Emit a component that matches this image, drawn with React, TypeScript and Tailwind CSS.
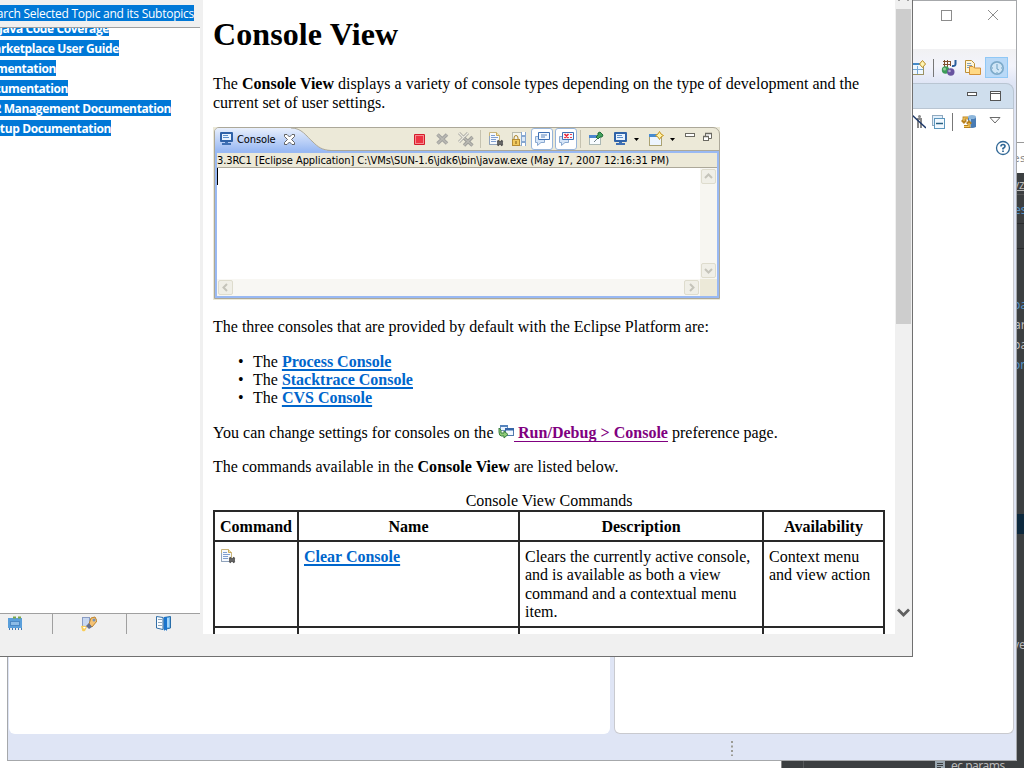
import React from "react";

type IconProps = { children: React.ReactNode; className?: string; w?: number; h?: number };

function Icon({ children, className = "", w = 16, h = 16 }: IconProps) {
  return (
    <svg width={w} height={h} viewBox={`0 0 ${w} ${h}`} className={"block shrink-0 " + className} fill="none">
      {children}
    </svg>
  );
}

function ClearIcon({ className = "" }: { className?: string }) {
  return (
    <Icon className={className}>
      <path d="M1.5 1.5H8.5L11.5 4.5V13.5H1.5Z" fill="#f6f9fd" stroke="#c9b57c" />
      <path d="M1.5 5V13.5H9" stroke="#8fa3bd" />
      <path d="M8.5 1.5V4.5H11.5" stroke="#c9a95a" fill="#f3e2a8" />
      <path d="M3 4.5H7M3 6.5H10M3 8.5H8M3 10.5H8" stroke="#7f9ed0" />
      <path d="M9.5 9.5L14.5 14.5M14.5 9.5L9.5 14.5" stroke="#4a4a4a" strokeWidth="2.2" />
      <rect x="9" y="10.500" width="6" height="3" fill="#666" />
    </Icon>
  );
}

function Monitor({ className = "" }: { className?: string }) {
  return (
    <Icon className={className}>
      <rect x="1" y="1" width="13" height="10" rx="1" fill="#2f62a8" />
      <rect x="3" y="3" width="9" height="6" fill="#e9f3ff" />
      <path d="M4 4.5H9M4 6.500H10" stroke="#5c8fc9" />
      <path d="M6 11H9V12H12V14H3V12H6Z" fill="#3f70b4" />
    </Icon>
  );
}

function ArrowDown({ className = "" }: { className?: string }) {
  return (
    <Icon w={5} h={3} className={className}>
      <path d="M0 0H5L2.5 3Z" fill="#000" />
    </Icon>
  );
}

function ToolbarSep({ className = "" }: { className?: string }) {
  return <div className={"h-[18px] w-px shrink-0 bg-[#c5c2b0] " + className} />;
}

function ToggleBubble({ className, children }: { className: string; children: React.ReactNode }) {
  return (
    <div className={"flex h-[22px] w-[22px] shrink-0 items-center justify-center rounded-[3px] border border-[#98b5da] bg-white " + className}>
      <Icon>
        <path d="M1.500 5.500H10.500V11.500H7L3.500 14.500V11.500H1.500Z" fill="#d5e5f8" stroke="#8aa9d0" />
        <path d="M4.500 1.500H15.500V8.500H4.500Z" fill="#f4f9ff" stroke="#3f70b4" />
        {children}
      </Icon>
    </div>
  );
}

function ScrollButton({ d }: { d: string }) {
  return (
    <div className="flex size-[15px] shrink-0 items-center justify-center rounded-[2px] border border-[#dedccd] bg-[#f0efe7]">
      <Icon w={9} h={9}>
        <path d={d} stroke="#c5c4ba" strokeWidth="2" />
      </Icon>
    </div>
  );
}

function ConsoleWidget() {
  return (
    <div className="h-[173px] w-[507px] bg-[#ece9d8] pl-px font-['DejaVu_Sans_Condensed','DejaVu_Sans',sans-serif] text-[11px] text-black">
      <div className="flex h-[172px] w-[506px] flex-col overflow-hidden rounded-tl-[5px] rounded-tr-[7px] border border-[#aca899]">
        <div className="flex h-[22px] shrink-0 items-center">
          <div className="relative flex h-[22px] w-[115px] shrink-0 items-center">
            <svg width="118" height="23" viewBox="0 0 118 23" className="absolute left-0 top-0">
              <defs>
                <linearGradient id="tab" x1="0" y1="0" x2="0" y2="1">
                  <stop offset="0" stopColor="#e8effc" />
                  <stop offset="1" stopColor="#99b9f3" />
                </linearGradient>
              </defs>
              <path d="M0 0H76C87 0 91 8 98 14C103 19 107 22 116 23H0Z" fill="url(#tab)" />
              <path d="M76 0C87 0 91 8 98 14C103 19 107 22 116 22.500" fill="none" stroke="#aca899" />
            </svg>
            <Monitor className="relative ml-1" />
            <span className="relative ml-[2px] mt-[2px] w-[40px] whitespace-nowrap leading-[14px] tracking-[-0.100px]">Console</span>
            <Icon w={11} h={11} className="relative ml-[7px]">
              <path d="M.5 .5H3L5.500 3L8 .5H10.500V2.500L7.500 5.500L10.500 8.500V10.500H8L5.500 8L3 10.500H.5V8.500L3.500 5.500L.5 2.500Z" fill="#fff" stroke="#555" strokeWidth=".9" />
            </Icon>
          </div>
          <Icon className="ml-[81px]">
            <rect x="3" y="3" width="11" height="11" rx="1" fill="#d41c2b" />
            <rect x="4.500" y="4.500" width="8" height="8" fill="#ed3443" stroke="#f58a90" />
          </Icon>
          <Icon className="ml-[7px]">
            <path d="M3.500 3.500L13 12.500M13 3.500L3.500 12.500" stroke="#a3a3a0" strokeWidth="3.600" />
            <path d="M3.500 3.500L13 12.500M13 3.500L3.500 12.500" stroke="#bab9b3" strokeWidth="1.500" />
          </Icon>
          <Icon className="ml-2">
            <path d="M1 2L10 11M10 2L1 11" stroke="#aaa9a3" strokeWidth="3" />
            <path d="M1 2L10 11M10 2L1 11" stroke="#eeece2" strokeWidth="1.200" />
            <path d="M6 7L14.500 14.500M14.500 6L6 14.500" stroke="#9f9f9b" strokeWidth="3.400" />
            <path d="M6 7L14.500 14.500M14.500 6L6 14.500" stroke="#bab9b3" strokeWidth="1.200" />
          </Icon>
          <ToolbarSep className="ml-[6px]" />
          <ClearIcon className="ml-[7px]" />
          <Icon className="ml-[7px]">
            <rect x="1.500" y="1.500" width="13" height="13" fill="#f3f3eb" stroke="#b9baac" />
            <rect x="10" y="1" width="5" height="14" fill="#87a8d1" />
            <path d="M11 2.500H14M11 13.500H14" stroke="#fff" strokeWidth="3" />
            <path d="M11 8H14" stroke="#dce9f8" strokeWidth="4" />
            <path d="M3 9V7Q3 4.500 5 4.500Q7 4.500 7 7V9" stroke="#aa8127" />
            <rect x="1.500" y="8.500" width="7" height="6" fill="#f1c95d" stroke="#b58b31" />
            <rect x="4.500" y="10" width="1" height="3" fill="#805c16" />
          </Icon>
          <ToggleBubble className="ml-1">
            <path d="M7 4H13M7 6H11" stroke="#5b83ba" />
          </ToggleBubble>
          <ToggleBubble className="ml-[2px]">
            <path d="M6.500 3L10.500 7M10.500 3L6.500 7M13 3V4M13 6V7" stroke="#ed2435" strokeWidth="1.700" />
          </ToggleBubble>
          <ToolbarSep className="ml-[3px]" />
          <Icon className="ml-[7px]">
            <rect x="1.500" y="4.500" width="11" height="9" fill="#f8fcff" stroke="#aab7b4" />
            <rect x="1" y="4" width="8" height="3" fill="#4c86cf" />
            <path d="M6 11L9 8" stroke="#71818a" />
            <path d="M10 2L12 1L15 4L14 6L12 6L10 8L8 6L10 4Z" fill="#43a15b" stroke="#216b39" />
          </Icon>
          <Monitor className="ml-[9px]" />
          <ArrowDown className="ml-[5px]" />
          <Icon className="ml-[9px]">
            <rect x="1.500" y="3.500" width="12" height="11" fill="#edf5ff" stroke="#aaa273" />
            <rect x="1" y="3" width="8" height="3" fill="#478bd1" />
            <path d="M11.500 .5L13 3L15.500 4.500L13 6L11.500 8.500L10 6L7.500 4.500L10 3Z" fill="#fff2a5" stroke="#c99620" />
          </Icon>
          <ArrowDown className="ml-[6px]" />
          <Icon w={11} h={13} className="mb-[3px] ml-[9px]">
            <rect x="1.500" y="2.500" width="9" height="3" fill="#fff" stroke="#6b6a62" />
          </Icon>
          <Icon w={10} h={14} className="mb-[3px] ml-[7px]">
            <path d="M3.500 2.500H9.500V7.500H6.500V5.500H3.500Z" fill="#fff" stroke="#6b6a62" />
            <rect x="1.500" y="5.500" width="5" height="4" fill="#fff" stroke="#6b6a62" />
            <path d="M3 2.500H10M1 5.500H7" stroke="#6b6a62" strokeWidth="1.500" />
          </Icon>
        </div>
        <div className="ml-[112px] h-px shrink-0 bg-[#aca899]" />
        <div className="flex min-h-0 grow flex-col border-2 border-[#99b9f3]">
          <div className="h-[15px] shrink-0 whitespace-nowrap border-b border-[#aca899] bg-[#ece9d8] leading-[16px] tracking-[-0.075px]">
            3.3RC1 [Eclipse Application] C:\VMs\SUN-1.6\jdk6\bin\javaw.exe (May 17, 2007 12:16:31 PM)
          </div>
          <div className="flex min-h-0 grow">
            <div className="min-w-0 grow bg-white">
              <div className="h-[17px] w-px bg-black" />
            </div>
            <div className="flex w-[17px] flex-col items-center justify-between bg-[#f7f6f1] py-px">
              <ScrollButton d="M1 6L4.500 2.500L8 6" />
              <ScrollButton d="M1 3L4.500 6.500L8 3" />
            </div>
          </div>
          <div className="flex h-[17px] shrink-0">
            <div className="flex grow items-center justify-between bg-[#f8f7f3] px-px">
              <ScrollButton d="M6 1L2.500 4.500L6 8" />
              <ScrollButton d="M3 1L6.500 4.500L3 8" />
            </div>
            <div className="w-[17px] bg-[#ece9d8]" />
          </div>
        </div>
      </div>
    </div>
  );
}

function Article() {
  const link = "font-bold text-[#0066cc] underline decoration-2 underline-offset-[2px] [text-decoration-skip-ink:none]";
  const cell = "border-2 border-[#292929] px-[5px] pb-[4px] pt-[6px] align-top";
  return (
    <main className="h-[634px] w-[692px] overflow-hidden bg-white pl-[10px] font-['Liberation_Serif',serif] text-[16px] leading-[18.4px] text-black">
      <h1 className="mt-[16px] text-[32px] font-bold leading-[37px] tracking-[0.100px]">Console View</h1>
      <p className="mt-[22.400px] w-[665px] tracking-[0.010px]">
        The <b>Console View</b> displays a variety of console types depending on the type of development and the current set of user settings.
      </p>
      <div className="mt-[14.800px]"><ConsoleWidget /></div>
      <p className="mt-[18.200px]">The three consoles that are provided by default with the Eclipse Platform are:</p>
      <ul className="mt-4">
        {["Process Console", "Stacktrace Console", "CVS Console"].map((name) => (
          <li key={name} className="flex h-[18.400px] pl-[25px]">
            <span className="w-[15px]">•</span>
            <span className="whitespace-pre">The </span>
            <a className={link}>{name}</a>
          </li>
        ))}
      </ul>
      <div className="mt-4 flex h-[18.400px] whitespace-pre">
        <span className="w-[285px] tracking-[0.020px]">You can change settings for consoles on the </span>
        <Icon>
          <rect x="2.500" y="1.500" width="7" height="5" fill="#eaf4ff" stroke="#6f92bd" />
          <rect x="2" y="1" width="8" height="2" fill="#5684bd" />
          <rect x="7.500" y="4.500" width="8" height="7" fill="#f2f8ff" stroke="#5279ad" />
          <rect x="7" y="4" width="9" height="2.500" fill="#3465a8" />
          <path d="M1 4L3 6V9H6V7L10 10.500L6 14V12H3.500Q1 12 1 8Z" fill="#8dca76" stroke="#3b8040" />
        </Icon>
        <a className="h-[18px] border-b border-[#800080] font-bold leading-[18.400px] tracking-[0.020px] text-[#800080]"> Run/Debug &gt; Console</a>
        <span> preference page.</span>
      </div>
      <p className="mt-4 tracking-[0.020px]">The commands available in the <b>Console View</b> are listed below.</p>
      <table className="mt-[15px] w-[672px] table-fixed border-collapse">
        <caption className="h-[18px]">Console View Commands</caption>
        <colgroup>
          <col className="w-[84px]" />
          <col className="w-[221px]" />
          <col className="w-[244px]" />
          <col className="w-[121px]" />
        </colgroup>
        <thead>
          <tr>
            {["Command", "Name", "Description", "Availability"].map((t) => (
              <th key={t} className={cell}>{t}</th>
            ))}
          </tr>
        </thead>
        <tbody>
          <tr>
            <td className={cell}><ClearIcon /></td>
            <td className={cell}><a className={link}>Clear Console</a></td>
            <td className={cell}>Clears the currently active console, and is available as both a view command and a contextual menu item.</td>
            <td className={cell}>Context menu and view action</td>
          </tr>
          <tr>
            <td className={cell + " h-10"} />
            <td className={cell} />
            <td className={cell} />
            <td className={cell} />
          </tr>
        </tbody>
      </table>
    </main>
  );
}

const topics = [
  { text: "Java Code Coverage", row: "w-[109px]" },
  { text: "arketplace User Guide", row: "w-[119px]" },
  { text: "mentation", row: "w-[56px]" },
  { text: "cumentation", row: "w-[68px]" },
  { text: "2 Management Documentation", row: "w-[171px]" },
  { text: "etup Documentation", row: "w-[111px]" },
];

function TopicsPane() {
  return (
    <aside className="flex h-[634px] w-[200px] flex-col font-['Open_Sans',sans-serif] text-white">
      <div className="h-[28px] shrink-0 border-b border-[#a0a0a0] pt-[5px]">
        <div className="flex h-[16px] w-[194px] justify-end overflow-hidden whitespace-nowrap bg-[#0078d7] text-[12px] leading-[18px] tracking-[-0.250px]">
          <span>arch Selected Topic and its Subtopics</span>
        </div>
      </div>
      <div className="min-h-0 grow overflow-hidden bg-white">
        <div className="-mt-[8px] flex flex-col gap-1">
          {topics.map((t) => (
            <div key={t.text} className={"flex h-[16px] justify-end overflow-hidden whitespace-nowrap bg-[#0078d7] text-[12px] font-bold leading-[18px] tracking-[-0.380px] " + t.row}>
              <span>{t.text}</span>
            </div>
          ))}
        </div>
      </div>
      <div className="flex h-[21px] shrink-0 border-t border-[#a0a0a0]">
        <div className="flex w-[53px] border-r border-[#a0a0a0] pl-[7px] pt-[2px]">
          <Icon>
            <rect x="1" y="2" width="14" height="10" fill="#5a9fdb" />
            <rect x="3" y="5" width="10" height="5" fill="#8dbce6" />
            <rect x="3.500" y="5.500" width="9" height="4" stroke="#4b88c4" />
            <path d="M6 1.500H9M11 1.500H14" stroke="#79a646" strokeWidth="2" />
            <path d="M2.500 12V14M5.500 12V14M8.500 12V14M11.500 12V14M14.500 12V14" stroke="#3f79b4" />
          </Icon>
        </div>
        <div className="flex w-[74px] border-r border-[#a0a0a0] pl-[28px] pt-[2px]">
          <Icon>
            <rect x="1.500" y="1.500" width="7" height="9" fill="#c7d7ef" stroke="#8a9cc3" />
            <path d="M10 2L14 1L16 5L11 11L8 8Z" fill="#f5c274" stroke="#bd832c" />
            <circle cx="13" cy="4" r="1.500" fill="#7393bd" />
            <path d="M8 7L11 11L8 13L5 10Z" fill="#68718b" />
            <path d="M0 10Q4 9 6 11L4 15Q1 16 1 14Z" fill="#f9cd59" />
            <path d="M2 11L5 11L3 13Z" fill="#fff" />
          </Icon>
        </div>
        <div className="pl-[28px] pt-[1px]">
          <Icon w={17}>
            <path d="M1.500 1.500L8 2.500V14.500L1.500 13Z" fill="#f9fcff" stroke="#326fa8" />
            <path d="M9 2.500L15.500 1.500V13L9 14.500Z" fill="#6fb8f0" stroke="#286da8" />
            <path d="M3 4.500H7M3 7.500H7M3 10.500H7" stroke="#8ba4b8" />
            <path d="M9 2H12V16L10.500 14.500L9 16Z" fill="#1974cd" />
            <path d="M13 3V12" stroke="#a3d5fa" strokeWidth="2" />
          </Icon>
        </div>
      </div>
    </aside>
  );
}

function HelpWindow() {
  return (
    <div className="absolute left-0 top-0 flex h-[657px] w-[913px] flex-col border-b border-r border-[#707070] bg-[#f0f0f0]">
      <div className="flex h-[634px]">
        <TopicsPane />
        <div className="w-[3px] bg-[#f0f0f0]" />
        <Article />
        <div className="flex w-[17px] flex-col items-center bg-[#f0f0f0]">
          <Icon w={15} h={9}>
            <path d="M2 .500H4M11 .500H13" stroke="#a0a0a0" />
          </Icon>
          <div className="h-[315px] w-[15px] bg-[#cdcdcd]" />
          <Icon w={13} h={9} className="mb-[17px] mt-auto">
            <path d="M1 1.500L6.500 7L12 1.500" stroke="#606060" strokeWidth="2.800" />
          </Icon>
        </div>
      </div>
    </div>
  );
}

function EclipseWindow() {
  return (
    <div className="absolute left-[7px] top-0 flex h-[761px] w-[1010px] flex-col border border-[#a6a8ab] bg-[#dfe5f5]">
      <div className="flex h-[48px] shrink-0 items-start justify-end bg-white pt-[8px]">
        <Icon w={12} h={12} className="mr-[34px]">
          <rect x=".5" y="1.500" width="10" height="10" stroke="#8c8c8c" />
        </Icon>
        <Icon w={12} h={12} className="mr-[17px]">
          <path d="M1 1L11 11M11 1L1 11" stroke="#8c8c8c" />
        </Icon>
      </div>
      <div className="flex h-[34px] shrink-0 items-center justify-end bg-linear-to-b from-[#f1f1f3] via-[#f3f4fb] to-[#dfe5f5] pr-[8px] pt-[3px]">
        <Icon>
          <rect x="1.500" y="3.500" width="12" height="11" fill="#eff8ff" stroke="#9b9263" />
          <path d="M1 4H11" stroke="#438aca" strokeWidth="2" />
          <path d="M2 9.500H13M7.500 6V14" stroke="#76a8d6" />
          <path d="M12.500 .5L15.500 4L12.500 7.500L9.500 4Z" fill="#fff5b4" stroke="#b98b23" />
        </Icon>
        <div className="ml-[7px] h-[18px] w-px bg-[#777]" />
        <Icon className="ml-[7px]">
          <path d="M2 1.500H10M2 4.500H10M3.500 0V7M6.500 0V7M9.500 1V6" stroke="#80502e" />
          <circle cx="4.500" cy="10" r="3.700" fill="#3c9b58" />
          <path d="M14.500 0V4Q14.500 6.500 11 6" stroke="#285d9c" strokeWidth="2" />
          <circle cx="9.800" cy="12" r="3.700" fill="#6854a0" />
          <circle cx="3.500" cy="9" r="1.500" fill="#91cc9b" />
          <circle cx="8.500" cy="11" r="1.300" fill="#b4a8d0" />
        </Icon>
        <Icon className="ml-[8px]">
          <path d="M.5 .5H6.500L9.500 3.500V12.500H.5Z" fill="#fff6d8" stroke="#bc8f36" />
          <path d="M2 3.500H6M2 5.500H7M2 7.500H5" stroke="#839fbe" />
          <path d="M4.500 6.500H8L9.500 8H15.500V14.500H4.500Z" fill="#ffd985" stroke="#d49138" />
        </Icon>
        <div className="ml-[4px] flex h-[21px] w-[23px] items-center justify-center border border-[#90c8f6] bg-[#b9d9f7]">
          <Icon>
            <circle cx="8" cy="8" r="6.200" fill="#d0e6f6" stroke="#7eabca" strokeWidth="1.700" />
            <path d="M8 4V9M8 9L10 10M3 8H4M12 8H13M8 12V13" stroke="#6c9fc2" />
          </Icon>
        </div>
      </div>
      <div className="mr-[2px] flex h-[26px] shrink-0 items-center justify-end rounded-tr-[8px] border-b border-r border-t border-[#b9c5d2] bg-[#cfdeed] pr-[12px]">
        <Icon w={10} h={12} className="mr-[13px]">
          <rect x=".5" y="2.500" width="9" height="3" fill="#fff" stroke="#555" />
        </Icon>
        <Icon w={11} h={12}>
          <rect x=".5" y="1.500" width="10" height="9" fill="#fff" stroke="#555" />
          <path d="M1 3.500H10" stroke="#555" />
        </Icon>
      </div>
      <div className="mr-[2px] flex h-[548px] shrink-0 flex-col border-r border-[#c9cacf] bg-white">
        <div className="flex h-[26px] items-center justify-end pr-[12px]">
          <Icon>
            <circle cx="9.500" cy="2.500" r="1.500" fill="#888" />
            <path d="M7 5H12M8 5V14M11 5V14" stroke="#888" strokeWidth="2" />
            <path d="M2 1L16 14" stroke="#1c3767" strokeWidth="1.500" />
          </Icon>
          <Icon w={15} className="ml-[5px]">
            <rect x="1.500" y="1.500" width="10" height="10" fill="#e1effb" stroke="#91aac0" />
            <rect x="3.500" y="4.500" width="10" height="10" fill="#f2f9ff" stroke="#5c96bd" />
            <path d="M5 9.500H12" stroke="#286284" strokeWidth="1.500" />
          </Icon>
          <div className="ml-[6px] h-[18px] w-px bg-[#777]" />
          <Icon className="ml-[8px]">
            <path d="M7 3V13Q11 15 15 13V3Z" fill="#487bb4" />
            <path d="M9 3V13" stroke="#a5cceb" strokeWidth="2" />
            <ellipse cx="11" cy="3" rx="4" ry="2" fill="#8db6db" />
            <path d="M7 4H3V7M1 6L3 8L5 6" stroke="#b88220" strokeWidth="2.800" />
            <path d="M3 12.500H8V9M6 10L8 8L10 10" stroke="#b88220" strokeWidth="2.800" />
            <path d="M7 4H3V7M3 12.500H8V9" stroke="#f8cc61" strokeWidth="1.200" />
          </Icon>
          <Icon w={12} h={12} className="mb-[2px] ml-[12px]">
            <path d="M1 2.500H11L6 8Z" fill="#fff" stroke="#6a6a6a" />
          </Icon>
        </div>
        <div className="mt-[5px] flex justify-end pr-[2px]">
          <Icon>
            <circle cx="8" cy="8" r="6.500" stroke="#306795" strokeWidth="1.300" />
            <path d="M6 6.500Q6 4.500 8 4.500Q10 4.500 10 6.200Q10 7.200 8 8.500V9.500M8 10.500V12" stroke="#306795" strokeWidth="1.700" />
          </Icon>
        </div>
      </div>
      <div className="flex h-[77px] shrink-0 pr-[2px]">
        <div className="ml-px w-[601px] rounded-b-[6px] bg-white" />
        <div className="ml-[4px] grow rounded-b-[6px] border-b border-l border-r border-[#c9cacf] bg-white" />
      </div>
      <div className="flex grow items-center pl-[722px] pt-[2px]">
        <Icon w={3} h={16}>
          <path d="M2 1V16" stroke="#9b9b94" strokeWidth="2" strokeDasharray="2 2.500" />
        </Icon>
      </div>
    </div>
  );
}

function Snippet({ className, children }: { className: string; children: React.ReactNode }) {
  return (
    <span className={"absolute flex w-[8px] overflow-hidden whitespace-nowrap leading-[16px] " + className}>
      <span className="-ml-[3px]">{children}</span>
    </span>
  );
}

function EditorWindow() {
  return (
    <div className="absolute left-[781px] top-0 h-[768px] w-[243px] border-l border-[#888] bg-[#3c3f41] font-['Noto_Sans',sans-serif] text-[12px] text-[#bbbbbb]">
      <div className="h-[173px] bg-white" />
      <Snippet className="left-[234px] top-[151px] font-['DejaVu_Sans_Mono',monospace] text-[11px] text-[#888]">es</Snippet>
      <div className="absolute left-[234px] top-[142px] h-px w-[8px] bg-[#999]" />
      <Snippet className="left-[234px] top-[177px] underline">yz</Snippet>
      <Snippet className="left-[235px] top-[202px] text-[#5391c5]">es</Snippet>
      <Snippet className="left-[234px] top-[297px] text-[#5391c5]">pa</Snippet>
      <Snippet className="left-[235px] top-[317px]">ar</Snippet>
      <Snippet className="left-[234px] top-[337px]">pa</Snippet>
      <Snippet className="left-[234px] top-[357px] text-[#5391c5]">on</Snippet>
      <Snippet className="left-[234px] top-[637px]">ve</Snippet>
      <div className="absolute left-[234px] top-[194px] h-px w-[8px] bg-[#555]" />
      <div className="absolute left-[234px] top-[223px] h-px w-[8px] bg-[#292b2d]" />
      <div className="absolute left-[234px] top-[248px] h-px w-[8px] bg-[#292b2d]" />
      <div className="absolute left-[234px] top-[514px] h-[20px] w-[8px] bg-[#0d293e]" />
      <div className="absolute left-[21px] top-[761px] h-[7px] w-px bg-[#55585a]" />
      <div className="absolute left-[153px] top-[757px] flex h-[11px] items-start gap-[6px] overflow-hidden">
        <Icon w={10} h={14} className="mt-[2px]">
          <rect width="10" height="14" fill="#9aa7b0" />
          <path d="M2 4.500H8M2 6.500H8M2 8.500H6" stroke="#3c3f41" />
        </Icon>
        <span className="leading-[17px] tracking-[-0.500px]">ec.params</span>
      </div>
    </div>
  );
}

export default function App() {
  return (
    <div className="relative h-[768px] w-[1024px] overflow-hidden bg-white">
      <EditorWindow />
      <EclipseWindow />
      <HelpWindow />
    </div>
  );
}
